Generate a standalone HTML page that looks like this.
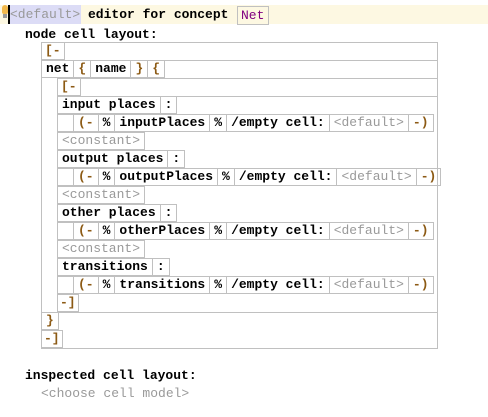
<!DOCTYPE html>
<html><head><meta charset="utf-8"><style>
*{margin:0;padding:0;box-sizing:border-box}
body{width:488px;height:417px;background:#fff;position:relative;overflow:hidden;font-family:"Liberation Mono","Courier New",monospace;font-size:13px;font-weight:bold;color:#000}
.a{position:absolute;white-space:pre}
.row{position:absolute;display:flex;height:18px}
.c{border:1px solid #c0c0c0;height:18px;line-height:16px;padding:0 4px;margin-left:-1px;white-space:pre}
.c:first-child{margin-left:0}
.o{color:#8c5a14}
.g{color:#999;font-weight:normal}
.box{position:absolute;border:1px solid #c0c0c0}
</style></head><body>
<div class="a" style="left:0;top:5px;width:488px;height:19px;background:#fdf8e2"></div>
<div class="a" style="left:2px;top:5px;width:6px;height:9px;border-radius:3px 3px 2px 2px;background:#f2b84b"></div>
<div class="a" style="left:3px;top:14px;width:4px;height:4px;background:#999"></div>
<div class="a" style="left:8px;top:5px;width:2px;height:19px;background:#000"></div>
<div class="a" style="left:10px;top:5px;width:71px;height:19px;background:#dcdcf6"></div>
<div class="a g" style="left:10px;top:6px;line-height:18px">&lt;default&gt;</div>
<div class="a" style="left:88px;top:6px;line-height:18px">editor for concept</div>
<div class="a" style="left:237px;top:6px;width:32px;height:19px;border:1px solid #c0c0c0;color:#800080;font-weight:normal;line-height:17px;padding-left:3px">Net</div>
<div class="a" style="left:25px;top:26px;line-height:18px">node cell layout:</div>

<div class="box" style="left:41px;top:42px;width:397px;height:307px"></div>
<div class="box" style="left:57px;top:78px;width:381px;height:235px"></div>
<div class="box" style="left:41px;top:42px;width:397px;height:19px;border-width:0 0 1px 0"></div>
<div class="box" style="left:57px;top:78px;width:381px;height:19px;border-width:0 0 1px 0"></div>

<div class="row" style="left:41px;top:42px"><div class="c o" style="padding:0 3px">[-</div></div>
<div class="row" style="left:41px;top:60px"><div class="c">net</div><div class="c o">{</div><div class="c">name</div><div class="c o">}</div><div class="c o">{</div></div>
<div class="row" style="left:57px;top:78px"><div class="c o" style="padding:0 3px">[-</div></div>

<div class="row" style="left:57px;top:96px"><div class="c">input places</div><div class="c">:</div></div>
<div class="row" style="left:57px;top:114px"><div class="c" style="width:17px"></div><div class="c o">(-</div><div class="c">%</div><div class="c">inputPlaces</div><div class="c">%</div><div class="c">/empty cell:</div><div class="c g">&lt;default&gt;</div><div class="c o">-)</div></div>
<div class="row" style="left:57px;top:132px"><div class="c g">&lt;constant&gt;</div></div>

<div class="row" style="left:57px;top:150px"><div class="c">output places</div><div class="c">:</div></div>
<div class="row" style="left:57px;top:168px"><div class="c" style="width:17px"></div><div class="c o">(-</div><div class="c">%</div><div class="c">outputPlaces</div><div class="c">%</div><div class="c">/empty cell:</div><div class="c g">&lt;default&gt;</div><div class="c o">-)</div></div>
<div class="row" style="left:57px;top:186px"><div class="c g">&lt;constant&gt;</div></div>

<div class="row" style="left:57px;top:204px"><div class="c">other places</div><div class="c">:</div></div>
<div class="row" style="left:57px;top:222px"><div class="c" style="width:17px"></div><div class="c o">(-</div><div class="c">%</div><div class="c">otherPlaces</div><div class="c">%</div><div class="c">/empty cell:</div><div class="c g">&lt;default&gt;</div><div class="c o">-)</div></div>
<div class="row" style="left:57px;top:240px"><div class="c g">&lt;constant&gt;</div></div>

<div class="row" style="left:57px;top:258px"><div class="c">transitions</div><div class="c">:</div></div>
<div class="row" style="left:57px;top:276px"><div class="c" style="width:17px"></div><div class="c o">(-</div><div class="c">%</div><div class="c">transitions</div><div class="c">%</div><div class="c">/empty cell:</div><div class="c g">&lt;default&gt;</div><div class="c o">-)</div></div>
<div class="row" style="left:57px;top:294px"><div class="c o" style="padding:0 2px">-]</div></div>
<div class="row" style="left:41px;top:312px"><div class="c o">}</div></div>
<div class="row" style="left:41px;top:330px"><div class="c o" style="padding:0 2px">-]</div></div>

<div class="a" style="left:25px;top:367px;line-height:18px">inspected cell layout:</div>
<div class="a g" style="left:41px;top:385px;line-height:18px">&lt;choose cell model&gt;</div>
</body></html>
